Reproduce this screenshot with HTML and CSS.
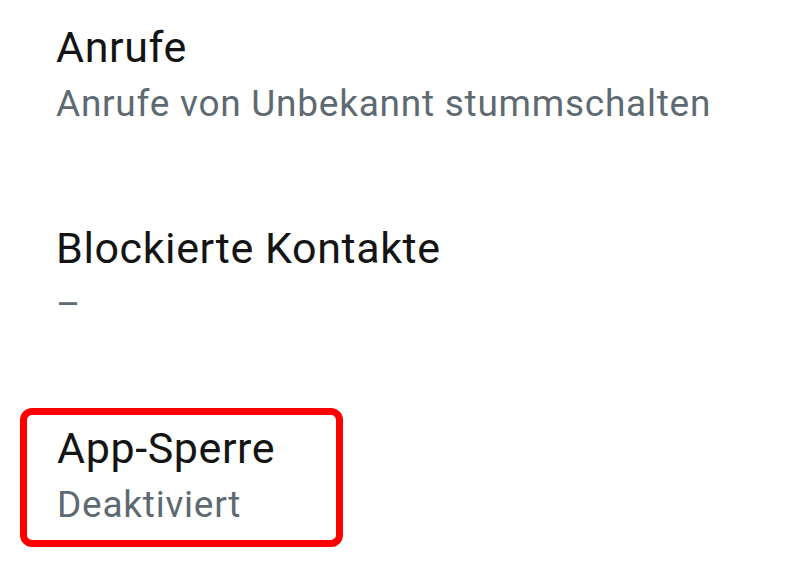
FILE: index.html
```html
<!DOCTYPE html>
<html lang="de">
<head>
<meta charset="utf-8">
<link rel="stylesheet" href="styles.css">
</head>
<body>
<div class="list">
  <div class="item first">
    <div class="title">Anrufe</div>
    <div class="sub">Anrufe von Unbekannt stummschalten</div>
  </div>
  <div class="item second">
    <div class="title">Blockierte Kontakte</div>
    <div class="sub">–</div>
  </div>
  <div class="item third highlight">
    <div class="title">App-Sperre</div>
    <div class="sub">Deaktiviert</div>
  </div>
</div>
</body>
</html>
```
FILE: styles.css
```css
html, body {
  margin: 0;
  padding: 0;
  background: #ffffff;
  width: 800px;
  height: 568px;
  overflow: hidden;
}
.list {
  font-family: Roboto, "Noto Sans", sans-serif;
  display: flex;
  flex-direction: column;
  padding-left: 56px;
}
.item {
  display: flex;
  flex-direction: column;
}
.title {
  font-size: 43px;
  line-height: 50px;
  letter-spacing: 0.6px;
  color: #141414;
}
.sub {
  font-size: 37px;
  line-height: 56px;
  letter-spacing: 0.75px;
  margin-top: 4px;
  color: #5e6a72;
}
.first { margin-top: 22px; }
.second { margin-top: 91px; }
.third { margin-top: 75px; }
.highlight {
  align-self: flex-start;
  box-sizing: border-box;
  width: 323px;
  margin-left: -36px;
  padding: 8px 0 7px 30px;
  border: 7px solid #ff0000;
  border-radius: 12px;
}
```
